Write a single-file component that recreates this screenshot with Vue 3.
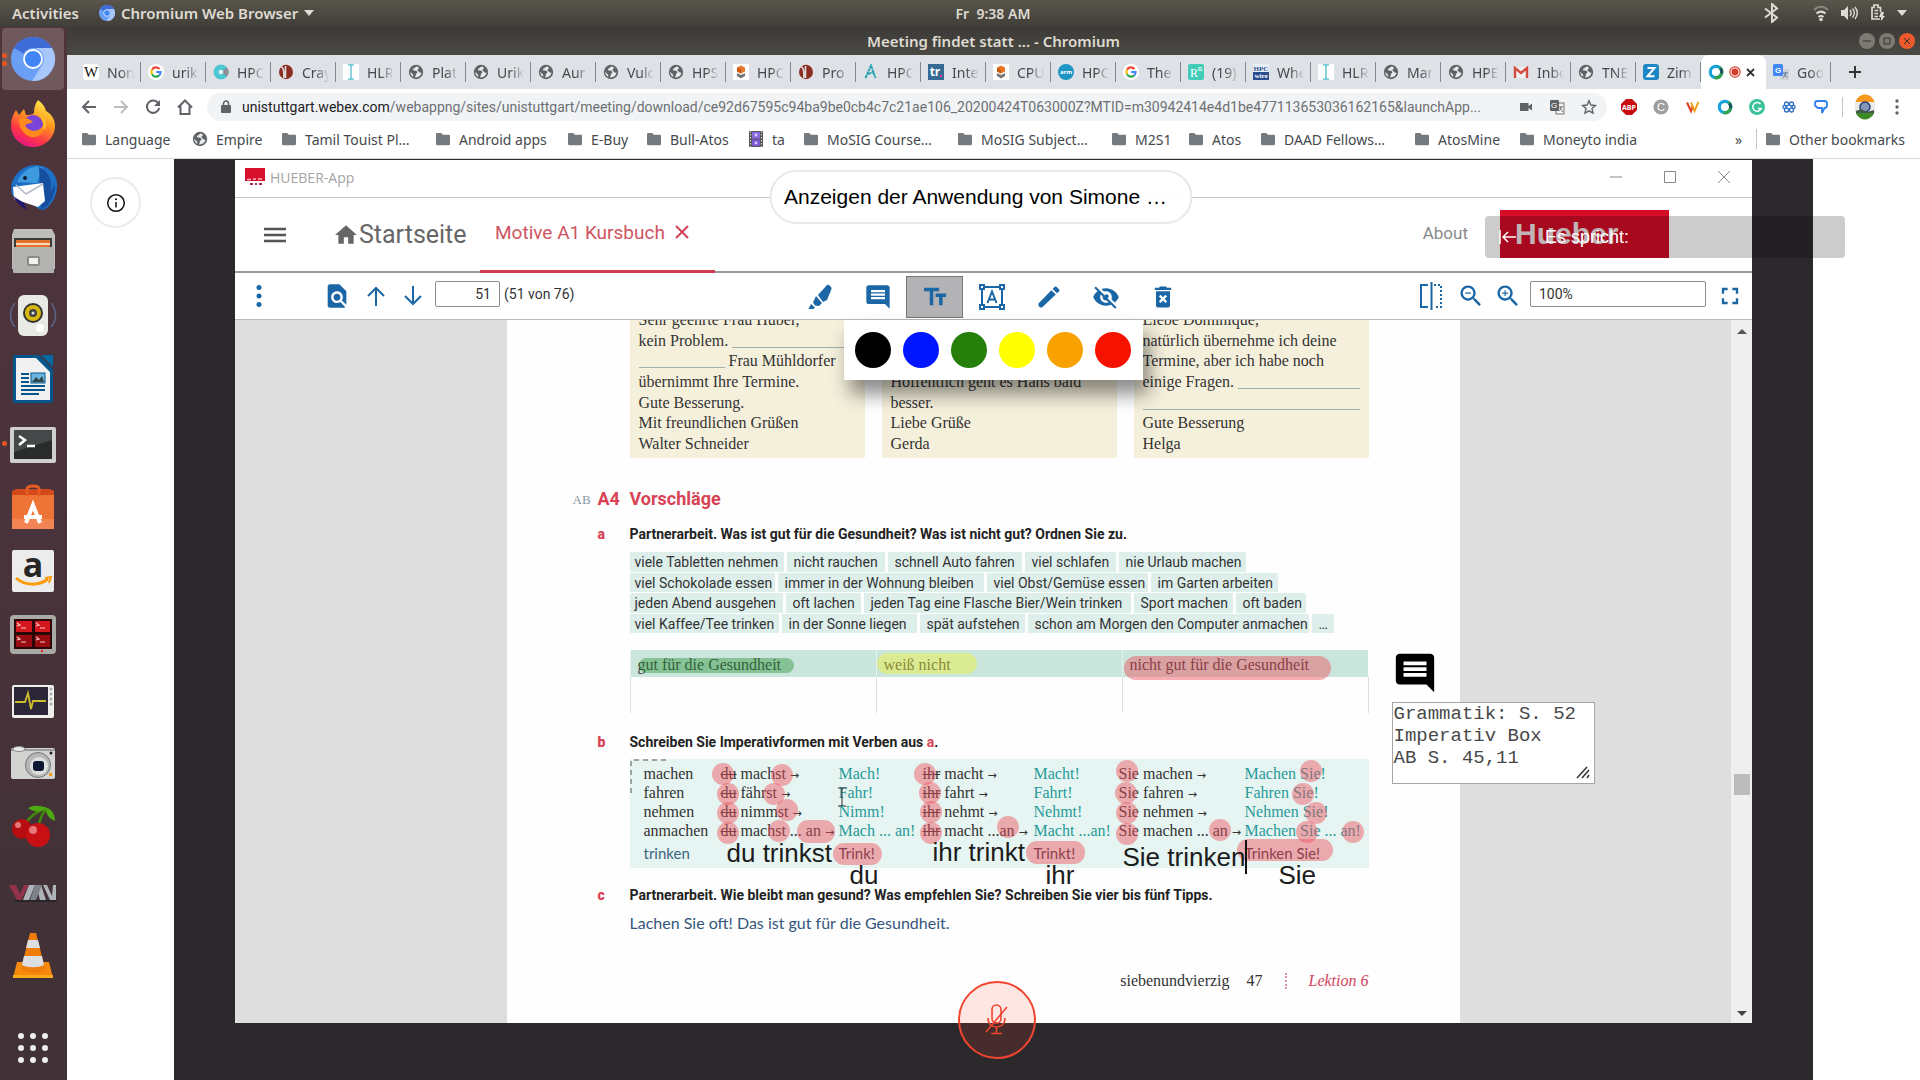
<script setup>
const art = {
  globe: '<circle cx="8" cy="8" r="7.2" fill="#5f6368"/><path d="M8.6 2.4c-1.6.3-1.5 1.8-3 2.2-1.2.4-.8 1.7.2 1.9 1.6.2 3.4.1 3.6 1.6.2 1.2-1.4 1.3-1.5 2.5 0 .9-.5 1.6-.9 2.9 3.5.3 6.3-2.1 6.5-5.2-.6.9-1.9.6-2.3-.3-.4-1-1.8-.9-1.7-2 .1-1 1.4-.8 1.3-1.9-.1-.8-.9-1.5-2.2-1.7zM2.3 7.4c-.2 2.4 1 4.4 3 5.4.1-1.5-.2-2.2-1.2-3C3.3 9.2 2.7 8.3 2.3 7.4z" fill="#e8eaed"/>',
  wiki: '<rect width="16" height="16" rx="3" fill="#fff"/><text x="8" y="13" text-anchor="middle" font-family="Liberation Serif" font-size="15" fill="#111">W</text>',
  google: '<circle cx="8" cy="8" r="8" fill="#fff"/><g fill="none" stroke-width="2.2"><path d="M11.4 4.9A4.6 4.6 0 0 0 4 5.7" stroke="#ea4335"/><path d="M4 5.7a4.6 4.6 0 0 0 0 4.6" stroke="#fbbc05"/><path d="M4 10.3a4.6 4.6 0 0 0 7.2 1.1" stroke="#34a853"/><path d="M11.2 11.4A4.6 4.6 0 0 0 12.6 8H8.2" stroke="#4285f4"/></g>',
  teal: '<circle cx="8" cy="8" r="7.5" fill="#4ac7d2"/><path d="M8 8l6-4.5a7.5 7.5 0 0 1 0 9z" fill="#8d8d92"/><circle cx="8" cy="8" r="2.3" fill="#e6f6f8"/>',
  cray: '<ellipse cx="8" cy="8" rx="7" ry="7.2" fill="#8b2c20"/><path d="M3 3c3.5 0 3 10 2.5 11M7.5 2v12" stroke="#dee1e6" stroke-width="1.6" fill="none"/><path d="M10 5c1.5 2 1 5-.5 6.5" stroke="#8b2c20" fill="none"/>',
  hlr: '<rect width="16" height="16" fill="#fff"/><path d="M5 .8h6M5 15.2h6M8 1v14" stroke="#4cbcca" stroke-width="1.3"/>',
  cube: '<rect width="16" height="16" fill="#fff"/><path d="M8 1.5l4 2v4l-4 2-4-2v-4z" fill="#e8772a"/><path d="M4 9l4 2 4-2v3l-4 2.5L4 12z" fill="#777"/><path d="M8 5.5v4l-4-2v-4z" fill="#c85a14"/>',
  a: '<path d="M2.5 14L8 1.5 12.5 14M5 10l6-2" fill="none" stroke="#2aa3b5" stroke-width="2" stroke-dasharray="3 .6"/>',
  tr: '<rect width="16" height="16" fill="#346a93"/><text x="7" y="12" text-anchor="middle" font-family="Open Sans" font-weight="700" font-size="12" fill="#fff">tr</text><rect x="12" y="11" width="2" height="2" fill="#e6308a"/>',
  arm: '<circle cx="8" cy="8" r="8" fill="#1f95c6"/><text x="8" y="10" text-anchor="middle" font-family="Open Sans" font-weight="700" font-size="6" fill="#fff">arm</text>',
  rg: '<rect width="16" height="16" rx="2" fill="#40ccb8"/><text x="6" y="13" text-anchor="middle" font-family="Liberation Serif" font-size="12" fill="#fff">R</text><text x="12" y="7" text-anchor="middle" font-family="Liberation Sans" font-weight="700" font-size="6" fill="#fff">G</text>',
  wire: '<rect width="16" height="8" fill="#e9edf5"/><rect y="8" width="16" height="8" fill="#2b4f8e"/><text x="8" y="7" text-anchor="middle" font-family="Liberation Serif" font-weight="700" font-size="7" fill="#2b4f8e">HPC</text><text x="8" y="14" text-anchor="middle" font-family="Liberation Serif" font-weight="700" font-size="7" fill="#fff">wire</text>',
  gmail: '<rect x="1" y="3" width="14" height="11" fill="#eee"/><path d="M2 14V4l6 5 6-5v10" fill="none" stroke="#d54b3d" stroke-width="2.4"/>',
  zim: '<rect width="16" height="16" rx="3" fill="#1d87c5"/><path d="M4.5 4h7l-7 8.3h7" fill="none" stroke="#fff" stroke-width="2"/>',
  webex: '<circle cx="8" cy="8" r="5.7" fill="#fff" stroke="#15a4d8" stroke-width="3.2"/><path d="M11.5 3.5a5.7 5.7 0 0 1-5 10" fill="none" stroke="#36a04a" stroke-width="3.2"/><path d="M12.5 4.5a5.7 5.7 0 0 1 1 5" fill="none" stroke="#1b4a6a" stroke-width="2.6"/>',
  translate: '<rect x="7" y="5" width="9" height="11" rx="1" fill="#cfd3d8"/><path d="M10 9h5M12.5 8v1.5c0 2-1 3-2.5 4M11 10.5l3.5 3" stroke="#5a7a9a" fill="none"/><rect width="10" height="12" rx="1.5" fill="#4285f4"/><text x="5" y="9" text-anchor="middle" font-family="Liberation Sans" font-weight="700" font-size="8" fill="#fff">G</text>',
  folder: '<path d="M1 3.2C1 2.5 1.5 2 2.2 2h4l1.6 1.8h6C14.5 3.8 15 4.3 15 5v8c0 .7-.5 1.2-1.2 1.2H2.2C1.5 14.2 1 13.7 1 13z" fill="#757a7e"/>',
  film: '<rect x="1" width="14" height="16" fill="#555"/><rect x="4" y="1" width="8" height="6.5" fill="#8b6be0"/><rect x="4" y="8.5" width="8" height="6.5" fill="#7a58d6"/><path d="M2.5 0v16M13.5 0v16" stroke="#ccc" stroke-width="1.2" stroke-dasharray="1.5 1.5"/><circle cx="8" cy="4" r="1.4" fill="#d9ccff"/><circle cx="8" cy="12" r="1.4" fill="#d9ccff"/>',
  abp: '<path d="M5 0h6l5 5v6l-5 5H5l-5-5V5z" fill="#c70d12"/><text x="8" y="11" text-anchor="middle" font-family="Open Sans" font-weight="700" font-size="7" fill="#fff">ABP</text>',
  cgray: '<circle cx="8" cy="8" r="7.6" fill="#9e9e9e"/><text x="8" y="12" text-anchor="middle" font-family="Liberation Sans" font-size="11" fill="#fff">C</text>',
  vee: '<path d="M2 3.5l4 8.5 2-5" fill="none" stroke="#e0452c" stroke-width="2.2"/><path d="M6 3.5l3.5 8.5L13.5 3" fill="none" stroke="#f0a21e" stroke-width="2"/>',
  grammarly: '<circle cx="8" cy="8" r="8" fill="#3cc29a"/><path d="M11.5 5a4.4 4.4 0 1 0 .8 4.5H9" fill="none" stroke="#fff" stroke-width="1.5"/>',
  flower: '<g fill="none" stroke="#2e6fc0" stroke-width="1.3"><circle cx="5.5" cy="5" r="2"/><circle cx="10.5" cy="5" r="2"/><circle cx="5.5" cy="11" r="2"/><circle cx="10.5" cy="11" r="2"/><circle cx="3.5" cy="8" r="1.6"/><circle cx="12.5" cy="8" r="1.6"/></g>',
  bubble: '<path d="M4.5 2h7A2.5 2.5 0 0 1 14 4.5v2A2.5 2.5 0 0 1 11.5 9L9 14V9H5L2 6.5v-2A2.5 2.5 0 0 1 4.5 2z" fill="none" stroke="#2f80ed" stroke-width="1.8"/>',
  chromium: '<circle cx="22" cy="22" r="22" fill="#6b9ff5"/><path d="M22 0a22 22 0 0 1 19 11H22a11 11 0 0 0-9.5 5.5L3 11A22 22 0 0 1 22 0z" fill="#3e6bd6"/><path d="M41 11a22 22 0 0 1-20 33l10.5-16.5A11 11 0 0 0 22 11z" fill="#a7c6fa"/><circle cx="22" cy="22" r="9" fill="#4285f4" stroke="#fff" stroke-width="1.8"/>'
}

const tabs = [
  ['wiki', 'Non'], ['google', 'urika'], ['teal', 'HPC'], ['cray', 'Cray'], ['hlr', 'HLR'],
  ['globe', 'Plat'], ['globe', 'Urik'], ['globe', 'Aur'], ['globe', 'Vulc'], ['globe', 'HPS'],
  ['cube', 'HPC'], ['cray', 'Pro'], ['a', 'HPC'], ['tr', 'Inte'], ['cube', 'CPU'],
  ['arm', 'HPC'], ['google', 'The'], ['rg', '(19)'], ['wire', 'Whe'], ['hlr', 'HLR'],
  ['globe', 'Mar'], ['globe', 'HPE'], ['gmail', 'Inbo'], ['globe', 'TNE'], ['zim', 'Zim'],
  ['webex', ''], ['translate', 'Goo']
].map(([icon, title]) => ({ icon, title, active: icon === 'webex' }))

const extensions = ['abp', 'cgray', 'vee', 'webex', 'grammarly', 'flower', 'bubble']

const bookmarks = [
  ['folder', 'Language', 111], ['globe', 'Empire', 89], ['folder', 'Tamil Touist Pl…', 154],
  ['folder', 'Android apps', 132], ['folder', 'E-Buy', 79], ['folder', 'Bull-Atos', 102],
  ['film', 'ta', 55], ['folder', 'MoSIG Course…', 154], ['folder', 'MoSIG Subject…', 154],
  ['folder', 'M2S1', 77], ['folder', 'Atos', 72], ['folder', 'DAAD Fellows…', 154],
  ['folder', 'AtosMine', 105], ['folder', 'Moneyto india', 130]
].map(([icon, title, width]) => ({ icon, title, width }))

const dock = [
  { name: 'Chromium', dots: 2, art: '<g transform="translate(2 2)">' + art.chromium + '</g>' },
  { name: 'Firefox', art: '<defs><linearGradient id="fx" x1=".8" y1="0" x2=".3" y2="1"><stop offset="0" stop-color="#fff44f"/><stop offset=".4" stop-color="#ff9a1f"/><stop offset=".75" stop-color="#ff3647"/><stop offset="1" stop-color="#e31587"/></linearGradient></defs><path d="M29 1c5 4 7 7 8 11 7 4 9 10 9 15a22 21 0 0 1-44 0c0-8 3-13 5-16l3 5 5-6 2 6c3 0 6 0 8-2 0-5 1-9 4-13z" fill="url(#fx)"/><circle cx="24" cy="26" r="10" fill="#7a44d8"/><path d="M10 20c5-2 10-1 14 3l-8 3c4 9 18 7 19-3 2 12-6 16-13 15-7-2-12-8-12-18z" fill="#ff8a1e"/><path d="M30 14c6 5 7 10 5 16" stroke="#ffb92e" stroke-width="3" fill="none"/>' },
  { name: 'Thunderbird', art: '<path d="M3 32C-1 16 12 1 28 2c14 1 21 11 20 23S38 48 32 47L18 38z" fill="#1c6fc4"/><path d="M8 19C14 5 28 1 34 5l-6 15z" fill="#3f9be0"/><circle cx="16" cy="15" r="2" fill="#123"/><path d="M30 4c12 5 14 18 11 26l5-9c0 12-5 22-14 26z" fill="#174fa0"/><path d="M4 24l30-4 2 18-7 6L5 36z" fill="#fff"/><path d="M7 22l10 9 17-10" fill="none" stroke="#b4bcc8" stroke-width="1.5"/><path d="M4 33c4 7 8 11 14 14l-3-7z" fill="#231a6e"/>' },
  { name: 'Files', art: '<path d="M5 2h38l3 6v34H3V8z" fill="#bdbdbb"/><rect x="5" y="11" width="38" height="9" fill="#3a3a38"/><rect x="7" y="13" width="34" height="7" fill="#e3712a"/><path d="M7 17h34" stroke="#fbd9b8" stroke-width="2"/><rect x="4" y="20" width="41" height="26" rx="1" fill="#b2b2b0"/><rect x="18" y="29" width="13" height="10" rx="2" fill="#8b8b89"/><rect x="20" y="31" width="9" height="6" fill="#f1f1ef"/>' },
  { name: 'Rhythmbox', art: '<path d="M6 12c-6 7-6 17 0 24M42 12c6 7 6 17 0 24" stroke="#6379a4" fill="none" stroke-width="1.6" opacity=".7"/><rect x="9" y="4" width="30" height="41" rx="6" fill="#e9e9e6"/><circle cx="24" cy="22" r="10" fill="#333"/><circle cx="24" cy="22" r="8" fill="#d9b90f"/><circle cx="24" cy="22" r="4" fill="#444"/><circle cx="24" cy="22" r="1.5" fill="#ddd"/><circle cx="31" cy="37" r="4" fill="#fff"/>' },
  { name: 'Writer', art: '<path d="M6 0h24l14 14v31a3 3 0 0 1-3 3H6a2 2 0 0 1-2-2V2a2 2 0 0 1 2-2z" fill="#04568c"/><path d="M32 0h12v12z" fill="#0369a3"/><path d="M7 3h20l14 14v28H7z" fill="#f1f1f1"/><path d="M12 19h8M12 23h8M12 27h8M12 31h24M12 35h24M12 39h18" stroke="#04568c" stroke-width="2"/><rect x="22" y="18" width="14" height="10" fill="#6cb4e2" stroke="#04568c"/><path d="M23 27l4-5 3 3 3-4 2 6z" fill="#344"/>' },
  { name: 'Terminal', dots: 1, art: '<rect x="1" y="8" width="46" height="36" rx="2" fill="#cfcfcd"/><rect x="5" y="11" width="38" height="29" fill="#2a2c2c"/><path d="M5 11h38v10L5 33z" fill="#454848"/><path d="M10 17l6 4-6 5M18 27h8" stroke="#fff" stroke-width="2.5" fill="none"/>' },
  { name: 'Ubuntu Software', art: '<path d="M3 10h42v36H3z" fill="#ee7337"/><path d="M3 8l4-2h34l4 2v4H3z" fill="#d2491a"/><path d="M18 13V6c0-4 12-4 12 0v7" fill="none" stroke="#e75b25" stroke-width="3"/><path d="M3 36h42v10H3z" fill="#f18452"/><path d="M17 40l7-18 7 18M15 34h18" stroke="#fff" stroke-width="4" fill="none"/>' },
  { name: 'Amazon', art: '<rect x="3" y="3" width="42" height="42" rx="2" fill="#ececec"/><text x="24" y="30" text-anchor="middle" font-family="Open Sans" font-weight="700" font-size="34" fill="#262626">a</text><path d="M7 31c9 8 23 8 32 1" fill="none" stroke="#ff9a0a" stroke-width="3"/><path d="M36 31l6-1-2 6" fill="none" stroke="#ff9a0a" stroke-width="2"/>' },
  { name: 'Terminator', art: '<rect x="1" y="4" width="46" height="39" rx="4" fill="#a9aaa5"/><rect x="5" y="8" width="38" height="30" fill="#2a0708"/><path d="M7 10h16v11H7zM26 10h15v11H26z" fill="#d4171c"/><path d="M7 24h16v12H7zM26 24h15v12H26z" fill="#960c10"/><path d="M8 12l3 2-3 1M12 17h5M27 12l3 2-3 1M31 17h5M8 26l3 2-3 1M12 31h5M27 26l3 2-3 1M31 31h5" stroke="#f7c5c5" stroke-width="1.2" fill="none"/><circle cx="33" cy="40" r="1.2" fill="#e22"/>' },
  { name: 'System Monitor', art: '<rect x="3" y="10" width="42" height="33" rx="2" fill="#f0efec"/><rect x="5" y="12" width="34" height="28" fill="#2b2638"/><path d="M6 27h10l3-9 3 16 2-8h13" stroke="#cdbd2a" stroke-width="1.8" fill="none"/><g fill="#aaa"><circle cx="42" cy="14" r="1.5"/><circle cx="42" cy="19" r="1.5"/><circle cx="42" cy="24" r="1.5"/><circle cx="42" cy="29" r="1.5"/></g>' },
  { name: 'Camera', art: '<rect x="2" y="9" width="44" height="31" rx="2" fill="#d3d3d1"/><path d="M2 11h44" stroke="#888" stroke-width="1.5"/><ellipse cx="10" cy="10" rx="6" ry="2.5" fill="#e9e9e9" stroke="#888"/><circle cx="29" cy="26" r="12.5" fill="#b5b6b6" stroke="#777"/><circle cx="30" cy="27" r="9" fill="#dedede"/><rect x="24" y="22" width="11" height="10" rx="3" fill="#0d1733"/><circle cx="42" cy="14" r="1.5" fill="#222"/><rect x="40" y="34" width="3" height="3" fill="#ef9a1c"/>' },
  { name: 'CherryTree', art: '<path d="M16 21C22 12 29 8 37 5M30 24c0-8 3-13 7-18" stroke="#3f8a0a" stroke-width="2.5" fill="none"/><path d="M19 5c7-4 15-2 19 0-6 4-13 5-19 0zM36 4c7 2 10 7 10 14-6-2-9-7-10-14z" fill="#4da813"/><circle cx="13" cy="26" r="10" fill="#b50d10"/><circle cx="29" cy="32" r="12" fill="#c81014"/><circle cx="9" cy="22" r="3" fill="#e8777a"/><circle cx="24" cy="27" r="4" fill="#e8777a"/>' },
  { name: 'VMware', art: '<path d="M0 18h7l4 9 4-9h5l-8 15H8z" fill="#94324b"/><path d="M20 18h6l-6 15h-6zM27 18h5l5 15h-6zM34 18h4l5 11 1-11h3v15h-6z" fill="#aeb3b8"/><path d="M26 18h7l-6 15h-6z" fill="#7d8388"/><path d="M6 34h42" stroke="#222" stroke-width="1.5"/>' },
  { name: 'VLC', art: '<path d="M8 31h32l4 16H4z" fill="#f78a0d"/><path d="M4 44h40v3H4z" fill="#fbaa1b"/><path d="M21 2h6l9 36c-5 5-19 5-24 0z" fill="#ef7d0b"/><path d="M19 9h10l2 8H17zM15 25h18l2 9c-6 3-16 3-22 0z" fill="#dcdfe2"/>' }
]

const letters = [
  [[{ t: 'Sehr geehrte Frau Huber,' }], [{ t: 'kein Problem.' }, { gap: true }], [{ blank: true }, { t: 'Frau Mühldorfer' }], [{ t: 'übernimmt Ihre Termine.' }], [{ t: 'Gute Besserung.' }], [{ t: 'Mit freundlichen Grüßen' }], [{ t: 'Walter Schneider' }]],
  [[], [], [], [{ t: 'Hoffentlich geht es Hans bald' }], [{ t: 'besser.' }], [{ t: 'Liebe Grüße' }], [{ t: 'Gerda' }]],
  [[{ t: 'Liebe Dominique,' }], [{ t: 'natürlich übernehme ich deine' }], [{ t: 'Termine, aber ich habe noch' }], [{ t: 'einige Fragen.' }, { gap: true }], [{ gap: true }], [{ t: 'Gute Besserung' }], [{ t: 'Helga' }]]
]

const chips = [
  [['viele Tabletten nehmen', 154], ['nicht rauchen', 98], ['schnell Auto fahren', 134], ['viel schlafen', 91], ['nie Urlaub machen', 127]],
  [['viel Schokolade essen', 145], ['immer in der Wohnung bleiben', 206], ['viel Obst/Gemüse essen', 161], ['im Garten arbeiten', 127]],
  [['jeden Abend ausgehen', 153], ['oft lachen', 75], ['jeden Tag eine Flasche Bier/Wein trinken', 267], ['Sport machen', 99], ['oft baden', 70]],
  [['viel Kaffee/Tee trinken', 149], ['in der Sonne liegen', 135], ['spät aufstehen', 105], ['schon am Morgen den Computer anmachen', 281], ['…', 22]]
]

const verbs = [
  ['machen', 'machst', 'Mach!', 'macht', 'Macht!', 'Sie machen', 'Machen Sie!'],
  ['fahren', 'fährst', 'Fahr!', 'fahrt', 'Fahrt!', 'Sie fahren', 'Fahren Sie!'],
  ['nehmen', 'nimmst', 'Nimm!', 'nehmt', 'Nehmt!', 'Sie nehmen', 'Nehmen Sie!'],
  ['anmachen', 'machst ... an', 'Mach ... an!', 'macht ...an', 'Macht ...an!', 'Sie machen ... an', 'Machen Sie ... an!']
]

const marks = [
  [93, 15], [152, 16], [98, 35], [144, 35], [98, 54], [157, 51], [98, 74], [149, 72],
  [295, 15], [300, 34], [301, 53], [301, 74], [378, 68],
  [497, 12], [496, 34], [497, 54], [497, 75], [590, 71],
  [681, 12], [673, 35], [686, 54], [677, 73], [723, 73]
]
const bars = [[167, 61, 38, 23], [203, 84, 49, 22], [396, 82, 59, 23], [607, 80, 96, 22]]

const typed = [
  { t: 'du trinkst', x: 97, y: 77 }, { t: 'du', x: 220, y: 99 }, { t: 'ihr trinkt', x: 303, y: 76 },
  { t: 'ihr', x: 416, y: 99 }, { t: 'Sie trinken', x: 493, y: 81, caret: true }, { t: 'Sie', x: 649, y: 99 }
]

const colours = [['Schwarz', '#000000'], ['Blau', '#0016ff'], ['Grün', '#267f0a'], ['Gelb', '#ffff00'], ['Orange', '#f9a100'], ['Rot', '#f61200']]
</script>

<template>
  <div class="desktop">
    <header class="topbar">
      <div class="top-left">
        <button type="button">Activities</button>
        <button type="button" class="app-menu">
          <svg width="16" height="16" viewBox="0 0 44 44" v-html="art.chromium"></svg>
          Chromium Web Browser
          <svg width="10" height="6" viewBox="0 0 10 6"><path d="M0 0h10L5 6z" fill="#dfdbd2" /></svg>
        </button>
      </div>
      <span class="clock">Fr&nbsp; 9:38 AM</span>
      <div class="tray">
        <svg class="bt" width="18" height="20" viewBox="0 0 18 20"><path d="M2 5.5l12 9L9 19V1l5 4.5-12 9" fill="none" stroke="#dfdbd2" stroke-width="2" /></svg>
        <svg width="16" height="18" viewBox="0 0 16 18"><g fill="none" stroke="#dfdbd2" stroke-width="2"><path d="M1 6c4-4.5 10-4.5 14 0" opacity=".4" /><path d="M3.5 9.5c3-2.5 6-2.5 9 0M5.5 13c2-1.5 3-1.5 5 0" /></g><circle cx="8" cy="15.5" r="1.8" fill="#dfdbd2" /></svg>
        <svg width="17" height="16" viewBox="0 0 17 16"><path d="M0 5h3l4-4v14l-4-4H0z" fill="#dfdbd2" /><path d="M9 5c1.5 2 1.5 4 0 6M11.5 3.5c2.5 3 2.5 6 0 9M14 2c3 4 3 8 0 12" fill="none" stroke="#dfdbd2" stroke-width="1.4" /></svg>
        <svg width="15" height="18" viewBox="0 0 15 18"><path d="M10 15H2V3.5h2V1h4v2.5h2.5V8M4.5 6.5H8M4.5 9.5H8M4.5 12.5H8" fill="none" stroke="#dfdbd2" stroke-width="1.7" /><path d="M11 8l-2 5h2v4l4-5h-2l1-4z" fill="#dfdbd2" /></svg>
        <svg width="10" height="6" viewBox="0 0 10 6"><path d="M0 0h10L5 6z" fill="#dfdbd2" /></svg>
      </div>
    </header>

    <div class="workspace">
      <nav class="dock" aria-label="Dock">
        <button v-for="(d, i) in dock" :key="d.name" type="button" :class="['dock-item', { current: i === 0 }]" :aria-label="d.name">
          <span v-if="d.dots" class="dots"><i v-for="n in d.dots" :key="n"></i></span>
          <svg width="48" height="48" viewBox="0 0 48 48" v-html="d.art"></svg>
        </button>
        <button type="button" class="apps" aria-label="Show Applications"><i v-for="n in 9" :key="n"></i></button>
      </nav>

      <div class="browser">
        <div class="titlebar">
          <span>Meeting findet statt ... - Chromium</span>
          <div class="win-buttons">
            <button type="button" aria-label="Minimize"><svg width="8" height="8" viewBox="0 0 8 8"><path d="M0 4h8" /></svg></button>
            <button type="button" aria-label="Maximize"><svg width="8" height="8" viewBox="0 0 8 8"><path d="M1 1h6v6H1z" /></svg></button>
            <button type="button" class="close" aria-label="Close"><svg width="8" height="8" viewBox="0 0 8 8"><path d="M1 1l6 6M7 1L1 7" /></svg></button>
          </div>
        </div>

        <div class="tabs">
          <div v-for="(t, i) in tabs" :key="i" :class="['tab', { active: t.active }]">
            <svg width="16" height="16" viewBox="0 0 16 16" v-html="art[t.icon]"></svg>
            <span v-if="!t.active" class="tab-title">{{ t.title }}</span>
            <template v-else>
              <svg width="12" height="14" viewBox="0 0 14 14"><circle cx="7" cy="7" r="6" fill="#fff" stroke="#d83b27" stroke-width="1.3" /><circle cx="7" cy="7" r="4" fill="#d83b27" /></svg>
              <button type="button" class="tab-close" aria-label="Close tab"><svg width="9" height="9" viewBox="0 0 9 9"><path d="M1 1l7 7M8 1L1 8" stroke="#333" stroke-width="1.8" /></svg></button>
            </template>
          </div>
          <button type="button" class="new-tab" aria-label="New tab"><svg width="14" height="14" viewBox="0 0 14 14"><path d="M7 1v12M1 7h12" stroke="#333" stroke-width="2" /></svg></button>
        </div>

        <div class="toolbar">
          <button type="button" aria-label="Back"><svg width="16" height="16" viewBox="0 0 16 16"><path d="M15 8H2M8 2L2 8l6 6" /></svg></button>
          <button type="button" class="off" aria-label="Forward"><svg width="16" height="16" viewBox="0 0 16 16"><path d="M1 8h13M8 2l6 6-6 6" /></svg></button>
          <button type="button" aria-label="Reload"><svg width="16" height="16" viewBox="0 0 16 16"><path d="M13.5 4.5A6.2 6.2 0 1 0 14.2 9" /><path d="M15 1v6H9z" fill="#5f6368" stroke="none" /></svg></button>
          <button type="button" aria-label="Home"><svg width="16" height="16" viewBox="0 0 16 16"><path d="M1 8.5L8 1.5l7 7M3.5 7v8h9V7" /></svg></button>
          <div class="omnibox">
            <svg width="10" height="13" viewBox="0 0 10 13"><path d="M1 5h8a1 1 0 0 1 1 1v6a1 1 0 0 1-1 1H1a1 1 0 0 1-1-1V6a1 1 0 0 1 1-1z" fill="#5f6368" /><path d="M2.5 5V3.5a2.5 2.5 0 0 1 5 0V5" fill="none" stroke="#5f6368" stroke-width="1.5" /></svg>
            <p class="url"><b>unistuttgart.webex.com</b>/webappng/sites/unistuttgart/meeting/download/ce92d67595c94ba9be0cb4c7c21ae106_20200424T063000Z?MTID=m30942414e4d1be477113653036162165&amp;launchApp...</p>
            <div class="omni-icons">
              <svg width="14" height="14" viewBox="0 0 14 14"><path d="M1 3h8.5v3L13 3.5v7L9.5 8v3H1z" fill="#5f6368" /></svg>
              <svg width="16" height="16" viewBox="0 0 16 16"><rect x="7" y="4" width="8" height="11" fill="none" stroke="#777" /><rect x="1" y="1" width="9" height="11" rx="1" fill="#5f6368" /><text x="5" y="9" text-anchor="middle" font-size="8" font-family="Liberation Sans" fill="#fff">G</text><path d="M10 8h4M12 7v1c0 2-1 3-2 4M11 9l3 4" stroke="#777" fill="none" /></svg>
              <svg width="16" height="16" viewBox="0 0 16 16"><path d="M8 1.8l1.9 4.2 4.5.5-3.4 3 1 4.6L8 11.8l-4 2.3 1-4.6-3.4-3L6.1 6z" fill="none" stroke="#5f6368" stroke-width="1.4" /></svg>
            </div>
          </div>
          <div class="extensions">
            <button v-for="(e, i) in extensions" :key="i" type="button" :aria-label="e"><svg width="16" height="16" viewBox="0 0 16 16" v-html="art[e]"></svg></button>
          </div>
          <span class="rule"></span>
          <button type="button" class="avatar" aria-label="Profile"><svg width="22" height="26" viewBox="0 -2 22 26"><defs><clipPath id="av"><ellipse cx="11" cy="11" rx="10.5" ry="12.5" /></clipPath></defs><g clip-path="url(#av)"><rect y="-2" width="22" height="26" fill="#e9ebe9" /><rect y="-2" width="22" height="8" fill="#f8981d" /><rect y="17" width="22" height="8" fill="#3c8b27" /><circle cx="11" cy="11" r="5" fill="#8496b5" stroke="#28407a" stroke-width="1.5" /><path d="M2 15l5-2 6 3 7-2v3H2z" fill="#43584a" /></g></svg></button>
          <button type="button" class="kebab" aria-label="Menu"><svg width="4" height="16" viewBox="0 0 4 16"><g fill="#5f6368"><circle cx="2" cy="2" r="1.7" /><circle cx="2" cy="8" r="1.7" /><circle cx="2" cy="14" r="1.7" /></g></svg></button>
        </div>

        <div class="bookmarks">
          <a v-for="b in bookmarks" :key="b.title" href="#" :style="{ width: b.width + 'px' }"><svg width="16" height="16" viewBox="0 0 16 16" v-html="art[b.icon]"></svg>{{ b.title }}</a>
          <span class="more">»</span>
          <span class="rule"></span>
          <a href="#"><svg width="16" height="16" viewBox="0 0 16 16" v-html="art.folder"></svg>Other bookmarks</a>
        </div>

        <main class="meeting">
          <button type="button" class="info" aria-label="Info"><svg width="20" height="20" viewBox="0 0 20 20"><circle cx="10" cy="10" r="8.3" fill="none" stroke="#111" stroke-width="1.5" /><path d="M10 9v5.5" stroke="#111" stroke-width="1.5" /><circle cx="10" cy="6.3" r="1" fill="#111" /></svg></button>
          <div class="sharing">Anzeigen der Anwendung von Simone …</div>
          <div class="speaker">
            <svg width="18" height="14" viewBox="0 0 18 14"><path d="M1 0v14M17 7H4M9 2L4 7l5 5" fill="none" stroke="#fff" stroke-width="1.5" /></svg>
            <span>Es spricht:</span>
          </div>

          <section class="stage">
            <div class="app">
              <div class="app-title">
                <svg width="20" height="18" viewBox="0 0 20 18"><path d="M0 0h20v13H0z" fill="#d8102c" /><path d="M2 11.5h4M8 11h3M13 11h4" stroke="#f7b8c0" stroke-width="1.5" /><path d="M5 16h3M10 16h2M14 16h3" stroke="#b5254d" stroke-width="2" /></svg>
                <span>HUEBER-App</span>
                <div class="app-window-buttons">
                  <button type="button" aria-label="Minimieren"><svg width="14" height="14" viewBox="0 0 14 14"><path d="M1 7h12" /></svg></button>
                  <button type="button" aria-label="Maximieren"><svg width="14" height="14" viewBox="0 0 14 14"><path d="M1.5 1.5h11v11h-11z" /></svg></button>
                  <button type="button" aria-label="Schließen"><svg width="14" height="14" viewBox="0 0 14 14"><path d="M1 1l12 12M13 1L1 13" /></svg></button>
                </div>
              </div>

              <div class="app-head">
                <button type="button" class="burger" aria-label="Menü"><svg width="22" height="16" viewBox="0 0 22 16"><path d="M0 2h22M0 8h22M0 14h22" stroke="#555" stroke-width="2.5" /></svg></button>
                <a href="#" class="start"><svg width="24" height="24" viewBox="1 1 22 22"><path d="M10 20v-6h4v6h5v-8h3L12 3 2 12h3v8z" fill="#666" /></svg>Startseite</a>
                <div class="book-tab">Motive A1 Kursbuch<button type="button" aria-label="Tab schließen"><svg width="14" height="14" viewBox="0 0 14 14"><path d="M1 1l12 12M13 1L1 13" stroke="#cf4455" stroke-width="2" /></svg></button></div>
                <a href="#" class="about">About</a>
                <div class="brand">Hueber</div>
              </div>

              <div class="app-tools">
                <button type="button" class="slot dots-slot" aria-label="Mehr"><svg width="6" height="24" viewBox="0 0 6 24"><circle cx="3" cy="3.5" r="2.5" /><circle cx="3" cy="12" r="2.5" /><circle cx="3" cy="20.5" r="2.5" /></svg></button>
                <button type="button" class="slot" aria-label="Suchen"><svg width="28" height="28" viewBox="0 0 24 24"><path d="M20 19.59V8l-6-6H6c-1.1 0-1.99.9-1.99 2L4 20c0 1.1.89 2 1.99 2H18c.45 0 .85-.15 1.19-.4l-4.43-4.43c-.8.52-1.74.83-2.76.83-2.76 0-5-2.24-5-5s2.24-5 5-5 5 2.24 5 5c0 1.02-.31 1.96-.83 2.75L20 19.59zM9 13c0 1.66 1.34 3 3 3s3-1.34 3-3-1.34-3-3-3-3 1.34-3 3z" /></svg></button>
                <button type="button" class="slot" aria-label="Vorherige Seite"><svg width="20" height="22" viewBox="0 0 20 22"><path class="line" d="M10 21V3M2 11l8-8 8 8" /></svg></button>
                <button type="button" class="slot" aria-label="Nächste Seite"><svg width="20" height="22" viewBox="0 0 20 22"><path class="line" d="M10 1v18M2 11l8 8 8-8" /></svg></button>
                <label class="page-no"><input type="text" value="51" aria-label="Seite">(51 von 76)</label>
                <div class="markup">
                  <button type="button" aria-label="Textmarker"><svg width="28" height="28" viewBox="0 0 28 28"><path d="M11 12L20 2c1.5-1 5 2 4.5 4L20 17l-4 2zM9 13l6 7-3 3-4-.5-2-3zM4 21l4 3.5L6.5 26H1.5z" /></svg></button>
                  <button type="button" aria-label="Kommentar"><svg width="28" height="28" viewBox="0 0 24 24"><path d="M21.99 4c0-1.1-.89-2-1.99-2H4c-1.1 0-2 .9-2 2v12c0 1.1.9 2 2 2h14l4 4-.01-18zM18 14H6v-2h12v2zm0-3H6V9h12v2zm0-3H6V6h12v2z" /></svg></button>
                  <button type="button" class="on" aria-label="Text"><svg width="28" height="28" viewBox="0 0 24 24"><path d="M2.5 4v3h5v12h3V7h5V4h-13zm19 5h-9v3h3v7h3v-7h3V9z" /></svg></button>
                  <button type="button" aria-label="Textfeld"><svg width="28" height="28" viewBox="0 0 28 28"><path class="line" d="M4 4h20v20H4z" /><path d="M1 1h6v6H1zM21 1h6v6h-6zM1 21h6v6H1zM21 21h6v6h-6z" /><path class="hole" d="M3 3h2v2H3zM23 3h2v2h-2zM3 23h2v2H3zM23 23h2v2h-2z" /><path class="line" d="M9.5 20L14 8.5 18.5 20M11 16.5h6" /></svg></button>
                  <button type="button" aria-label="Stift"><svg width="28" height="28" viewBox="0 0 24 24"><path d="M3 17.5c-.5 2 .8 4 3 3.5L17.81 9.94l-3.75-3.75zM20.71 7.04c.39-.39.39-1.02 0-1.41l-2.34-2.34c-.39-.39-1.02-.39-1.41 0l-1.83 1.83 3.75 3.75 1.83-1.83z" /></svg></button>
                  <button type="button" aria-label="Ausblenden"><svg width="28" height="28" viewBox="0 0 24 24"><path d="M12 7c2.76 0 5 2.24 5 5 0 .65-.13 1.26-.36 1.83l2.92 2.92c1.51-1.26 2.7-2.89 3.43-4.75-1.73-4.39-6-7.5-11-7.5-1.4 0-2.74.25-3.98.7l2.16 2.16C10.74 7.13 11.35 7 12 7zM2 4.27l2.28 2.28.46.46C3.08 8.3 1.78 10.02 1 12c1.73 4.39 6 7.5 11 7.5 1.55 0 3.03-.3 4.38-.84l.42.42L19.73 22 21 20.73 3.27 3 2 4.27zM7.53 9.8l1.55 1.55c-.05.21-.08.43-.08.65 0 1.66 1.34 3 3 3 .22 0 .44-.03.65-.08l1.55 1.55c-.67.33-1.41.53-2.2.53-2.76 0-5-2.24-5-5 0-.79.2-1.53.53-2.2z" /><circle cx="12.5" cy="11.5" r="1.8" /></svg></button>
                  <button type="button" aria-label="Löschen"><svg width="28" height="28" viewBox="0 0 24 24"><path fill-rule="evenodd" d="M6 19c0 1.1.9 2 2 2h8c1.1 0 2-.9 2-2V7H6v12zM19 4h-3.5l-1-1h-5l-1 1H5v2h14V4zM8.5 11.5l1.4-1.4 2.1 2.1 2.1-2.1 1.4 1.4-2.1 2.1 2.1 2.1-1.4 1.4-2.1-2.1-2.1 2.1-1.4-1.4 2.1-2.1z" /></svg></button>
                  <div class="palette"><button v-for="c in colours" :key="c[0]" type="button" :aria-label="c[0]" :style="{ background: c[1] }"></button></div>
                </div>
                <div class="view">
                  <button type="button" class="slot spread" aria-label="Doppelseite"><svg width="24" height="28" viewBox="0 0 24 28"><path class="line" d="M9 3H2v22h7" /><path class="line" d="M12.5 0v28" /><path class="line" stroke-dasharray="2 2" d="M15 3h7v22h-7" /></svg></button>
                  <button type="button" class="slot" aria-label="Verkleinern"><svg width="28" height="28" viewBox="0 0 24 24"><path d="M15.5 14h-.79l-.28-.27C15.41 12.59 16 11.11 16 9.5 16 5.91 13.09 3 9.5 3S3 5.91 3 9.5 5.91 16 9.5 16c1.61 0 3.09-.59 4.23-1.57l.27.28v.79l5 4.99L20.49 19l-4.99-5zm-6 0C7.01 14 5 11.99 5 9.5S7.01 5 9.5 5 14 7.01 14 9.5 11.99 14 9.5 14zM7 9h5v1H7z" /></svg></button>
                  <button type="button" class="slot" aria-label="Vergrößern"><svg width="28" height="28" viewBox="0 0 24 24"><path d="M15.5 14h-.79l-.28-.27C15.41 12.59 16 11.11 16 9.5 16 5.91 13.09 3 9.5 3S3 5.91 3 9.5 5.91 16 9.5 16c1.61 0 3.09-.59 4.23-1.57l.27.28v.79l5 4.99L20.49 19l-4.99-5zm-6 0C7.01 14 5 11.99 5 9.5S7.01 5 9.5 5 14 7.01 14 9.5 11.99 14 9.5 14zM9 7h1v2h2v1h-2v2H9v-2H7V9h2z" /></svg></button>
                  <input type="text" class="zoom" value="100%" aria-label="Zoom">
                  <button type="button" class="full" aria-label="Vollbild"><svg width="28" height="28" viewBox="0 0 24 24"><path d="M7 14H5v5h5v-2H7v-3zm-2-4h2V7h3V5H5v5zm12 7h-3v2h5v-5h-2v3zM14 5v2h3v3h2V5h-5z" /></svg></button>
                </div>
              </div>

              <div class="viewer">
                <div class="canvas">
                  <article class="page">
                    <div class="letters">
                      <div v-for="(l, i) in letters" :key="i" class="letter">
                        <p v-for="(line, j) in l" :key="j"><template v-for="(p, k) in line" :key="k"><span v-if="p.t">{{ p.t }}</span><i v-else :class="p.gap ? 'fill' : 'blank'"></i></template></p>
                      </div>
                    </div>

                    <h2><small>AB</small><span>A4</span><span>Vorschläge</span></h2>

                    <h3><b>a</b><span>Partnerarbeit. Was ist gut für die Gesundheit? Was ist nicht gut? Ordnen Sie zu.</span></h3>
                    <div class="chips">
                      <div v-for="(r, i) in chips" :key="i" class="chip-row"><span v-for="c in r" :key="c[0]" :style="{ width: c[1] + 'px' }">{{ c[0] }}</span></div>
                    </div>

                    <table class="sort">
                      <thead><tr><th><mark class="green"></mark>gut für die Gesundheit</th><th><mark class="yellow"></mark>weiß nicht</th><th><mark class="red"></mark>nicht gut für die Gesundheit</th></tr></thead>
                      <tbody><tr><td></td><td></td><td></td></tr></tbody>
                    </table>

                    <h3 class="task-b"><b>b</b><span>Schreiben Sie Imperativformen mit Verben aus <em>a</em>.</span></h3>
                    <div class="verbs">
                      <table>
                        <colgroup><col class="w1"><col class="w2"><col class="w3"><col class="w4"><col class="w5"><col class="w6"><col></colgroup>
                        <tbody>
                          <tr v-for="v in verbs" :key="v[0]">
                            <td>{{ v[0] }}</td>
                            <td><s>du</s> {{ v[1] }} <i class="arrow">→</i></td>
                            <td class="imp">{{ v[2] }}</td>
                            <td><s>ihr</s> {{ v[3] }} <i class="arrow">→</i></td>
                            <td class="imp">{{ v[4] }}</td>
                            <td>{{ v[5] }} <i class="arrow">→</i></td>
                            <td class="imp">{{ v[6] }}</td>
                          </tr>
                          <tr class="hand-row"><td>trinken</td><td></td><td class="dark">Trink!</td><td></td><td class="dark">Trinkt!</td><td></td><td class="dark">Trinken Sie!</td></tr>
                        </tbody>
                      </table>
                      <svg class="ink" width="739" height="109" viewBox="0 0 739 109">
                        <g fill="#f04d5a" fill-opacity=".45">
                          <circle v-for="(m, i) in marks" :key="i" :cx="m[0]" :cy="m[1]" r="11" />
                          <rect v-for="(b, i) in bars" :key="'b' + i" :x="b[0]" :y="b[1]" :width="b[2]" :height="b[3]" rx="11" />
                        </g>
                        <path d="M1 34V1h36" fill="none" stroke="#555" stroke-dasharray="5 4" />
                        <path d="M208 29h3l1 1 1-1h3M208 47h3l1-1 1 1h3M212 30v16" fill="none" stroke="#333" />
                      </svg>
                      <span v-for="t in typed" :key="t.t" :class="['typed', { caret: t.caret }]" :style="{ left: t.x + 'px', top: t.y + 'px' }">{{ t.t }}</span>
                    </div>

                    <h3 class="task-c"><b>c</b><span>Partnerarbeit. Wie bleibt man gesund? Was empfehlen Sie? Schreiben Sie vier bis fünf Tipps.</span></h3>
                    <p class="hand">Lachen Sie oft! Das ist gut für die Gesundheit.</p>
                    <footer><span>siebenundvierzig</span><span>47</span><i></i><em>Lektion 6</em></footer>

                    <div class="note">
                      <svg width="46" height="46" viewBox="0 0 24 24"><path d="M21.99 4c0-1.1-.89-2-1.99-2H4c-1.1 0-2 .9-2 2v12c0 1.1.9 2 2 2h14l4 4-.01-18zM18 14H6v-2h12v2zm0-3H6V9h12v2zm0-3H6V6h12v2z" /></svg>
                      <textarea aria-label="Notiz" rows="3">Grammatik: S. 52
Imperativ Box
AB S. 45,11</textarea>
                      <svg class="grip" width="14" height="13" viewBox="0 0 14 13"><path d="M1 12L11 1M6 12l7-8M11 12l2-3" stroke="#333" stroke-width="1.5" /></svg>
                    </div>
                  </article>
                </div>
                <div class="scrollbar">
                  <svg width="10" height="6" viewBox="0 0 10 6"><path d="M0 6h10L5 1z" fill="#555" /></svg>
                  <i></i>
                  <svg width="10" height="6" viewBox="0 0 10 6"><path d="M0 0h10L5 5z" fill="#444" /></svg>
                </div>
              </div>
            </div>
          </section>
          <button type="button" class="mute" aria-label="Stummschaltung aufheben"><svg width="30" height="34" viewBox="0 0 30 34"><g fill="none" stroke="#f0452e" stroke-width="1.6"><rect x="10" y="2" width="9" height="18" rx="4.5" /><path d="M6 15c0 6 4 9 8.5 9S23 21 23 15M14.5 24v6M9 30.5h11M25 4L4 29" /></g></svg></button>
        </main>
      </div>
    </div>
  </div>
</template>

<style>
body { margin: 0; background: #2b292c; }
</style>

<style scoped>
* { box-sizing: border-box; }
button { border: 0; padding: 0; background: none; font: inherit; color: inherit; display: flex; align-items: center; justify-content: center; }
a { color: inherit; text-decoration: none; }
p, h2, h3 { margin: 0; }
svg { flex: none; display: block; }
.desktop { min-height: 100vh; display: flex; flex-direction: column; font-family: "Noto Sans", sans-serif; }

.topbar { height: 27px; display: grid; grid-template-columns: 1fr auto 1fr; align-items: center; padding: 0 13px 1px 12px; background: linear-gradient(#59554c, #403e38); color: #dfdbd2; font-size: 15px; font-weight: 600; }
.top-left { display: flex; gap: 20px; }
.app-menu { gap: 6px; }
.clock { padding-left: 67px; font-size: 14px; }
.tray { display: flex; align-items: center; justify-content: flex-end; gap: 12px; }
.bt { margin-right: 20px; }

.workspace { flex: 1; display: flex; }
.dock { width: 67px; display: flex; flex-direction: column; gap: 2px; padding: 1px 3px 8px 2px; background: linear-gradient(#4f353a, #4a333c 45%, #3f3135); }
.dock-item { position: relative; height: 62px; border-radius: 4px; }
.current { background: #6f595d; }
.dots { position: absolute; left: 0; display: flex; flex-direction: column; gap: 3px; }
.dots i { width: 5px; height: 5px; border-radius: 50%; background: #e95420; }
.apps { margin-top: auto; height: 48px; display: grid; grid-template-columns: repeat(3, 6px); gap: 6px; justify-content: center; align-content: center; }
.apps i { width: 6px; height: 6px; border-radius: 50%; background: #eee; }

.browser { flex: 1; min-width: 0; display: flex; flex-direction: column; background: #fff; }
.titlebar { position: relative; height: 28px; display: flex; align-items: center; justify-content: center; padding-bottom: 1px; background: linear-gradient(#3c3b37, #4b4943); color: #dfdbd2; font-size: 15px; font-weight: 600; }
.win-buttons { position: absolute; right: 5px; top: 6px; display: flex; gap: 4px; }
.win-buttons button { width: 16px; height: 16px; border-radius: 50%; background: #7c7a73; }
.win-buttons .close { background: #ee5a2b; }
.win-buttons path { fill: none; stroke: #33322e; stroke-width: 1px; }

.tabs { height: 34px; display: flex; align-items: center; padding-left: 9px; background: #dee1e6; color: #45494d; font-size: 14px; }
.tab { position: relative; flex: 0 1 65px; min-width: 0; height: 34px; display: flex; align-items: center; gap: 8px; padding-left: 7px; }
.tab::after { content: ""; position: absolute; right: 0; top: 7px; width: 1px; height: 20px; background: #85888c; }
.tab-title { width: 27px; overflow: hidden; white-space: nowrap; mask-image: linear-gradient(90deg, #000 50%, transparent); }
.tab.active { background: #fff; border-radius: 8px 8px 0 0; gap: 5px; }
.tab.active::after { display: none; }
.new-tab { width: 28px; height: 28px; margin-left: 10px; }

.toolbar { height: 37px; display: flex; align-items: center; padding: 0 13px 2px 6px; }
.toolbar > button { width: 32px; }
.toolbar > button svg { fill: none; stroke: #5f6368; stroke-width: 2px; }
.toolbar > button.off svg { stroke: #bcbec0; }
.omnibox { flex: 1; min-width: 0; height: 28px; margin-left: 6px; border-radius: 14px; background: #f1f3f4; display: flex; align-items: center; gap: 11px; padding: 0 10px 0 14px; }
.url { flex: 1; min-width: 0; overflow: hidden; white-space: nowrap; font-family: Roboto, sans-serif; font-size: 14px; color: #6c7074; }
.url b { font-weight: 400; color: #202124; }
.omni-icons { display: flex; align-items: center; gap: 16px; }
.extensions { display: flex; padding: 0 5px 0 6px; }
.extensions button { width: 32px; }
.rule { width: 1px; height: 20px; background: #c4c6c9; }
.toolbar .avatar { width: 44px; }
.toolbar .avatar svg, .toolbar .kebab svg { stroke: none; }
.toolbar .kebab { width: 20px; }

.bookmarks { height: 33px; display: flex; align-items: center; padding: 0 15px 6px 14px; border-bottom: 1px solid #d8dadd; font-size: 14px; color: #45494d; white-space: nowrap; }
.bookmarks a { display: flex; align-items: center; gap: 8px; }
.more { margin-left: auto; padding-right: 14px; }
.bookmarks .rule { margin-right: 8px; }

.meeting { position: relative; flex: 1; padding: 0 107px; display: flex; }
.info { position: absolute; left: 23px; top: 18px; width: 51px; height: 51px; border: 2px solid #ebebeb; border-radius: 50%; background: #fff; }
.sharing { position: absolute; z-index: 3; left: 50%; top: 11px; transform: translateX(-50%); margin-left: -13px; width: 423px; height: 54px; border: 2px solid #e8e8e8; border-radius: 27px; padding-left: 13px; background: rgba(255, 255, 255, .93); font: 21px/50px "Liberation Sans", sans-serif; color: #000; white-space: nowrap; }
.speaker { position: absolute; z-index: 3; right: 75px; top: 57px; width: 360px; height: 42px; border-radius: 4px; background: rgba(0, 0, 0, .2); display: flex; align-items: center; gap: 28px; padding-left: 14px; color: #fff; font: 18px "Liberation Sans", sans-serif; }
.stage { flex: 1; min-width: 0; padding: 1px 61px 57px; background: #2b292c; }
.mute { position: absolute; z-index: 3; left: 50%; bottom: 21px; width: 78px; height: 78px; margin-left: -36px; border: 2px solid #f0452e; border-radius: 50%; background: rgba(255, 70, 50, .13); }

.app { height: 100%; display: flex; flex-direction: column; background: #fff; font-family: Roboto, sans-serif; }
.app-title { height: 37px; display: flex; align-items: center; gap: 5px; padding: 0 21px 3px 10px; color: #a4a4a4; font: 14px "Open Sans", sans-serif; }
.app-window-buttons { margin-left: auto; display: flex; gap: 40px; }
.app-window-buttons path { fill: none; stroke: #888; }
.app-head { height: 76px; display: flex; align-items: stretch; border-top: 1px solid #c4c4c6; border-bottom: 2px solid #9a9a9a; }
.burger { margin-left: 29px; }
.start { margin-left: 48px; width: 146px; display: flex; align-items: center; gap: 1px; color: #666; font-size: 25px; }
.book-tab { width: 235px; margin-bottom: -2px; padding: 0 0 4px 15px; display: flex; align-items: center; gap: 10px; border-bottom: 3px solid #cc3b4b; color: #cf5362; font-size: 19px; white-space: nowrap; }
.about { margin-left: auto; align-self: center; padding-bottom: 3px; color: #8a8a8a; font-size: 17px; }
.brand { align-self: center; width: 169px; height: 48px; margin: 0 83px 2px 32px; padding-left: 15px; background: #d40c26; color: #f2e2e5; font: bold 30px/48px "Liberation Sans", sans-serif; }

.app-tools { position: relative; z-index: 2; height: 47px; display: flex; align-items: center; border-bottom: 1px solid #b8b8b8; color: #333; font-size: 14px; }
.app-tools svg { fill: #1b66a5; }
.app-tools .line { fill: none; stroke: #1b66a5; stroke-width: 2px; }
.app-tools .hole { fill: #fff; }
.slot { width: 37px; }
.app-tools > .dots-slot { width: 48px; margin-right: 34px; }
.app-tools > .slot:nth-child(2) { width: 40px; }
.page-no { display: flex; align-items: center; gap: 4px; margin: 0 0 4px 4px; }
.app-tools input { height: 26px; border: 1px solid #8e8e8e; border-radius: 2px; padding: 0 8px; font: 14px Roboto, sans-serif; color: #333; background: #fff; }
.page-no input { width: 65px; text-align: right; }
.markup { position: absolute; left: 557px; top: 3px; display: flex; }
.markup > button { width: 57px; height: 42px; }
.markup .on { border: 1px solid #777; background: #b3b2b4; }
.palette { position: absolute; left: 52px; top: 44px; width: 299px; height: 60px; padding: 0 12px 0 11px; display: flex; align-items: center; gap: 12px; background: #fff; box-shadow: 6px 14px 18px rgba(0, 0, 0, .45); }
.palette button { width: 36px; height: 36px; border-radius: 50%; }
.view { margin-left: auto; display: flex; align-items: center; padding-right: 8px; }
.spread { margin-right: 3px; }
.view .zoom { width: 176px; margin: 0 10px 4px 4px; }

.viewer { flex: 1; min-height: 0; display: flex; overflow: hidden; background: #dedede; }
.canvas { flex: 1; display: flex; justify-content: center; }
.scrollbar { width: 21px; background: #f0eff0; display: flex; flex-direction: column; align-items: center; padding: 8px 0 6px; }
.scrollbar i { width: 16px; height: 21px; margin-top: 440px; background: #bdbcbd; }
.scrollbar svg:last-child { margin-top: auto; }

.page { position: relative; width: 953px; padding: 0 91px 31px 66px; margin-top: -10px; background: #fefefe; font-family: "Liberation Serif", serif; font-size: 16px; color: #333; }
.letters { display: grid; grid-template-columns: repeat(3, 235px); justify-content: space-between; margin-left: 57px; }
.letter { height: 148px; padding: 0 9px 4px; display: grid; grid-template-rows: repeat(7, 1fr); background: #f5f0dc; }
.letter p { display: flex; align-items: center; gap: 4px; white-space: nowrap; min-height: 0; line-height: 20px; }
.letter i { height: 14px; border-bottom: 1px solid #9fb0ac; }
.fill { flex: 1; }
.blank { width: 86px; }
h2, h3 { display: grid; align-items: center; font-family: Roboto, sans-serif; white-space: nowrap; }
h2 { grid-template-columns: 25px 32px 1fr; height: 30px; margin-top: 25px; font-size: 18px; color: #d84355; }
h2 small { font: 13px "Liberation Serif", serif; color: #8599a0; padding-top: 4px; }
h3 { grid-template-columns: 32px 1fr; height: 20px; margin: 11px 0 0 25px; font-size: 14px; color: #222; }
h3 b, h3 em { color: #d84355; font-style: normal; }
.chips { display: grid; grid-template-rows: repeat(4, 1fr); height: 82px; margin: 8px 0 0 57px; font: 14px Roboto, sans-serif; }
.chip-row { display: flex; gap: 3px; padding-bottom: 1px; min-height: 0; }
.chip-row span { padding-left: 7px; background: #ddeeeb; line-height: 20px; white-space: nowrap; }
.chip-row span:first-child { padding-left: 5px; }
.sort { width: 739px; margin: 16px 0 0 57px; border-collapse: collapse; table-layout: fixed; }
.sort th { position: relative; height: 27px; padding: 2px 0 0 7px; background: #c9e5dc; border-left: 1px solid #e6f3ef; text-align: left; font-weight: 400; line-height: 20px; }
.sort td { height: 36px; padding: 0; border-left: 1px solid #dcdfe0; border-right: 1px solid #dcdfe0; }
mark { position: absolute; border-radius: 10px; opacity: .45; }
.green { left: 8px; top: 8px; width: 155px; height: 15px; background: #33973f; }
.yellow { left: 0; top: 3px; width: 100px; height: 21px; background: #f2f23a; }
.red { left: 1px; top: 6px; width: 207px; height: 24px; border-radius: 12px; background: #f04d5a; }
.task-b { margin-top: 19px; }
.verbs { position: relative; height: 109px; margin: 7px 0 0 57px; padding: 5px 0 0 14px; background: #e6f5f1; }
.verbs table { width: 725px; border-collapse: collapse; table-layout: fixed; white-space: nowrap; line-height: 18px; }
.verbs td { height: 19px; padding: 0; }
.w1 { width: 77px; } .w2 { width: 118px; } .w3 { width: 84px; } .w4 { width: 111px; } .w5 { width: 85px; } .w6 { width: 126px; }
.imp { color: #279a9a; }
.arrow { font: 11px "DejaVu Sans", sans-serif; }
.verbs .hand-row td { height: 26px; font: 15px Lato, sans-serif; color: #3a6480; }
.verbs .hand-row .dark { color: #3a3440; }
.ink { position: absolute; left: 0; top: 0; }
.typed { position: absolute; font: 26px/34px "Liberation Sans", sans-serif; color: #1c1c1c; white-space: nowrap; }
.caret { border-right: 2px solid #111; }
.task-c { margin-top: 17px; }
.hand { margin: 8px 0 0 57px; font: 16px/20px Lato, sans-serif; color: #35567c; }
footer { display: flex; align-items: center; justify-content: flex-end; height: 20px; margin-top: 38px; }
footer span + span { margin-left: 17px; }
footer i { height: 16px; margin: 0 22px; border-left: 2px dotted #d897a5; }
footer em { color: #d4435f; }
.note { position: absolute; z-index: 1; left: 885px; top: 340px; width: 203px; }
.note textarea { display: block; width: 100%; height: 82px; margin-top: 6px; padding: 0 1px; border: 1px solid #a5a5a5; background: #fff; color: #484848; font: 19px/22px "Liberation Mono", monospace; resize: none; overflow: hidden; }
.grip { position: absolute; right: 5px; bottom: 5px; }
</style>
